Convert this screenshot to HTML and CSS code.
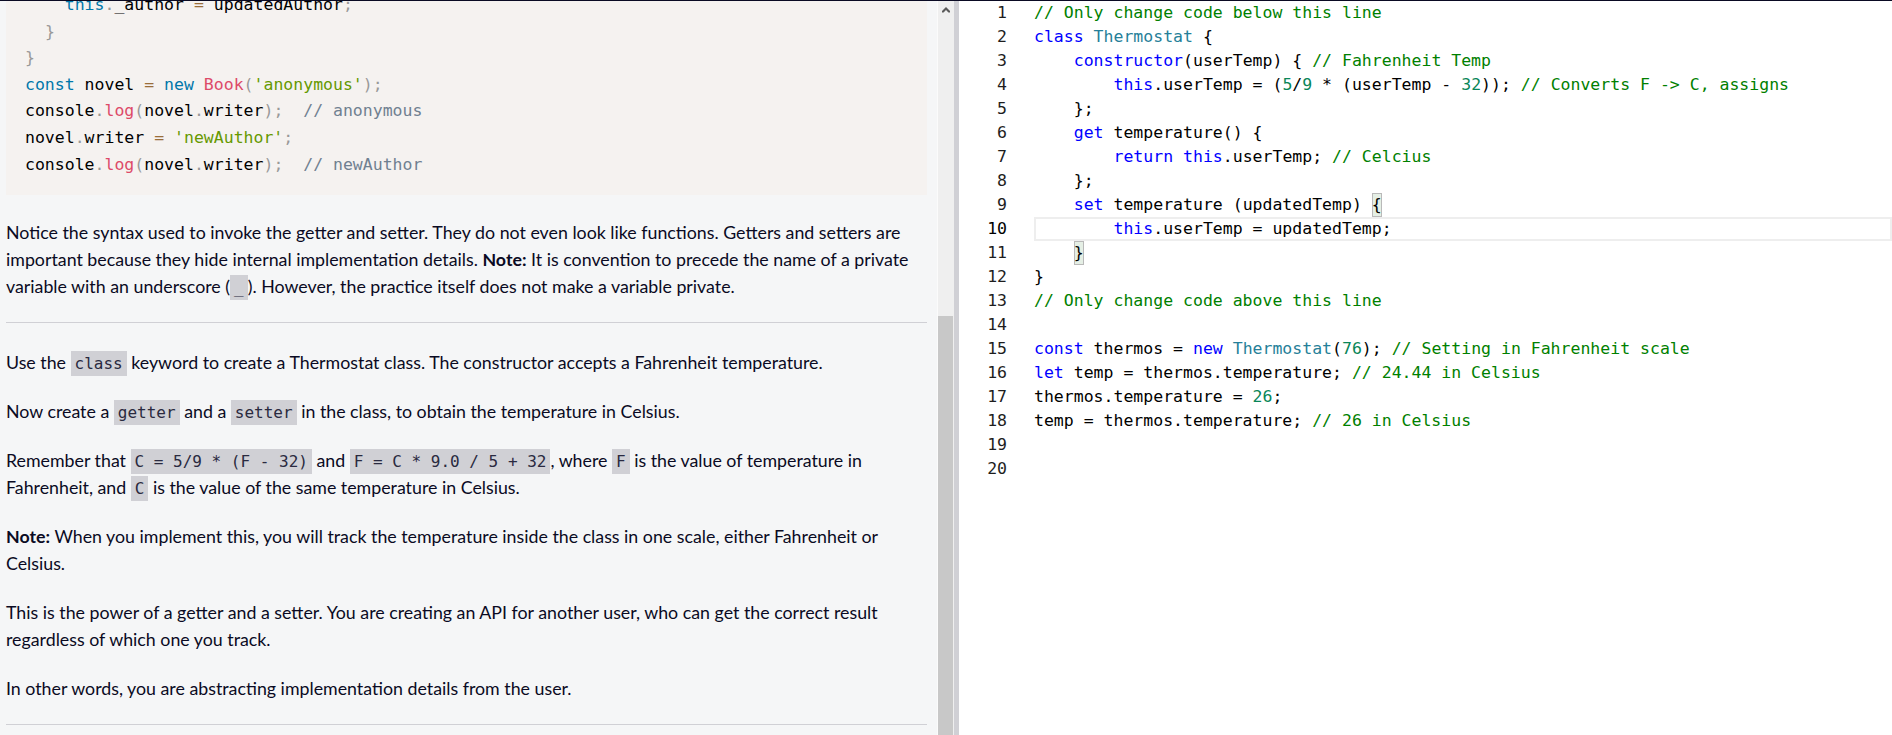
FILE: index.html
```html
<!DOCTYPE html>
<html lang="en">
<head>
<meta charset="utf-8">
<title>Use getters and setters to Control Access to an Object</title>
<link rel="stylesheet" href="styles.css">
</head>
<body>
<div class="topbar"></div>
<div class="main">
  <section class="desc">
<pre class="prism"><code><span class="k">class</span> <span class="cn">Book</span> <span class="p">{</span>
  <span class="k">constructor</span><span class="p">(</span>author<span class="p">)</span> <span class="p">{</span>
    <span class="k">this</span><span class="p">.</span>_author <span class="o">=</span> author<span class="p">;</span>
  <span class="p">}</span>
  <span class="cm">// getter</span>
  <span class="k">get</span> <span class="fn">writer</span><span class="p">(</span><span class="p">)</span> <span class="p">{</span>
    <span class="k">return</span> <span class="k">this</span><span class="p">.</span>_author<span class="p">;</span>
  <span class="p">}</span>
  <span class="cm">// setter</span>
  <span class="k">set</span> <span class="fn">writer</span><span class="p">(</span>updatedAuthor<span class="p">)</span> <span class="p">{</span>
    <span class="k">this</span><span class="p">.</span>_author <span class="o">=</span> updatedAuthor<span class="p">;</span>
  <span class="p">}</span>
<span class="p">}</span>
<span class="k">const</span> novel <span class="o">=</span> <span class="k">new</span> <span class="cn">Book</span><span class="p">(</span><span class="s">'anonymous'</span><span class="p">);</span>
console<span class="p">.</span><span class="fn">log</span><span class="p">(</span>novel<span class="p">.</span>writer<span class="p">);</span>  <span class="cm">// anonymous</span>
novel<span class="p">.</span>writer <span class="o">=</span> <span class="s">'newAuthor'</span><span class="p">;</span>
console<span class="p">.</span><span class="fn">log</span><span class="p">(</span>novel<span class="p">.</span>writer<span class="p">);</span>  <span class="cm">// newAuthor</span></code></pre>
    <p>Notice the syntax used to invoke the getter and setter. They do not even look like functions. Getters and setters are important because they hide internal implementation details. <strong>Note:</strong> It is convention to precede the name of a private variable with an underscore (<code>_</code>). However, the practice itself does not make a variable private.</p>
    <hr>
    <p>Use the <code>class</code> keyword to create a Thermostat class. The constructor accepts a Fahrenheit temperature.</p>
    <p>Now create a <code>getter</code> and a <code>setter</code> in the class, to obtain the temperature in Celsius.</p>
    <p>Remember that <code>C = 5/9 * (F - 32)</code> and <code>F = C * 9.0 / 5 + 32</code>, where <code>F</code> is the value of temperature in Fahrenheit, and <code>C</code> is the value of the same temperature in Celsius.</p>
    <p><strong>Note:</strong> When you implement this, you will track the temperature inside the class in one scale, either Fahrenheit or Celsius.</p>
    <p>This is the power of a getter and a setter. You are creating an API for another user, who can get the correct result regardless of which one you track.</p>
    <p>In other words, you are abstracting implementation details from the user.</p>
    <hr>
  </section>
  <div class="vscroll">
    <div class="vscroll-btn"><svg width="8" height="7" viewBox="0 0 8 7"><path d="M0 5 L4 1 L8 5 L8 6.5 L6.5 6.5 L4 4 L1.5 6.5 L0 6.5 Z" fill="#5a5a5a"/></svg></div>
    <div class="vscroll-thumb"></div>
  </div>
  <div class="divider"></div>
  <section class="editor">
    <div class="gutter">
      <div>1</div><div>2</div><div>3</div><div>4</div><div>5</div><div>6</div><div>7</div><div>8</div><div>9</div><div class="cur-num">10</div><div>11</div><div>12</div><div>13</div><div>14</div><div>15</div><div>16</div><div>17</div><div>18</div><div>19</div><div>20</div>
    </div>
    <div class="lines">
<div class="ln"><span class="c">// Only change code below this line</span></div>
<div class="ln"><span class="k">class</span> <span class="t">Thermostat</span> {</div>
<div class="ln">    <span class="k">constructor</span>(userTemp) { <span class="c">// Fahrenheit Temp</span></div>
<div class="ln">        <span class="k">this</span>.userTemp = (<span class="n">5</span>/<span class="n">9</span> * (userTemp - <span class="n">32</span>)); <span class="c">// Converts F -&gt; C, assigns</span></div>
<div class="ln">    };</div>
<div class="ln">    <span class="k">get</span> temperature() {</div>
<div class="ln">        <span class="k">return</span> <span class="k">this</span>.userTemp; <span class="c">// Celcius</span></div>
<div class="ln">    };</div>
<div class="ln">    <span class="k">set</span> temperature (updatedTemp) <span class="bm">{</span></div>
<div class="ln cur">        <span class="k">this</span>.userTemp = updatedTemp;</div>
<div class="ln">    <span class="bm">}</span></div>
<div class="ln">}</div>
<div class="ln"><span class="c">// Only change code above this line</span></div>
<div class="ln"> </div>
<div class="ln"><span class="k">const</span> thermos = <span class="k">new</span> <span class="t">Thermostat</span>(<span class="n">76</span>); <span class="c">// Setting in Fahrenheit scale</span></div>
<div class="ln"><span class="k">let</span> temp = thermos.temperature; <span class="c">// 24.44 in Celsius</span></div>
<div class="ln">thermos.temperature = <span class="n">26</span>;</div>
<div class="ln">temp = thermos.temperature; <span class="c">// 26 in Celsius</span></div>
<div class="ln"> </div>
<div class="ln"> </div>
    </div>
  </section>
</div>
</body>
</html>
```
FILE: styles.css
```css
html, body {
  margin: 0;
  padding: 0;
}

body {
  background: #ffffff;
  height: 735px;
  overflow: hidden;
}

.topbar {
  height: 1px;
  background: #0a0a23;
}

.main {
  display: flex;
  height: 734px;
}

/* ---------- description panel ---------- */
.desc {
  flex: none;
  width: 937px;
  box-sizing: border-box;
  padding: 0 10px 0 6px;
  background: #f5f6f7;
  overflow: hidden;
  font-family: Lato, "Open Sans", sans-serif;
  font-size: 17.8px;
  line-height: 27px;
  color: #0a0a23;
}

.prism {
  margin: -292px 0 24px;
  padding: 17px 19px;
  background: #f5f2f0;
  font-family: "DejaVu Sans Mono", monospace;
  font-size: 16.5px;
  line-height: 26.6px;
  color: #000000;
  white-space: pre;
  overflow: hidden;
}

.prism code {
  font-family: inherit;
}

.prism .k { color: #0077aa; }
.prism .cn { color: #dd4a68; }
.prism .fn { color: #dd4a68; }
.prism .s { color: #669900; }
.prism .p { color: #999999; }
.prism .o { color: #9a6e3a; }
.prism .cm { color: #708090; }

.desc p {
  margin: 0 0 22px;
}

.desc p code {
  font-family: "DejaVu Sans Mono", monospace;
  font-size: 16px;
  line-height: 1;
  padding: 3px 4px;
  background: #d0d0d5;
  color: #2a2a40;
}

.desc hr {
  border: 0;
  height: 1px;
  background: #d0d0d5;
  margin: 2px 0 26px;
}

/* ---------- scrollbar ---------- */
.vscroll {
  flex: none;
  width: 17px;
  box-sizing: border-box;
  border-left: 1px solid #fbfbfb;
  background: #efefef;
  display: flex;
  flex-direction: column;
}

.vscroll-btn {
  height: 17px;
  display: flex;
  align-items: center;
  justify-content: center;
  padding-right: 1px;
}

.vscroll-thumb {
  flex: 1;
  margin: 298px 1px 0 0;
  background: #c8c8c8;
}

.divider {
  flex: none;
  width: 5px;
  background: #d0d0d5;
}

/* ---------- editor ---------- */
.editor {
  flex: 1;
  display: flex;
  background: #ffffff;
  font-family: "DejaVu Sans Mono", monospace;
  font-size: 16.5px;
  line-height: 24px;
  color: #000000;
}

.gutter {
  flex: none;
  width: 75px;
  box-sizing: border-box;
  padding-right: 27px;
  text-align: right;
  color: #1e1e1e;
}

.gutter div {
  height: 24px;
}

.gutter .cur-num {
  color: #000000;
}

.lines {
  flex: 1;
}

.ln {
  height: 24px;
  white-space: pre;
}

.cur {
  box-shadow: inset 0 0 0 2px #eeeeee;
}

.lines .c { color: #008000; }
.lines .k { color: #0000ff; }
.lines .t { color: #267f99; }
.lines .n { color: #098658; }

.bm {
  display: inline-block;
  height: 24px;
  vertical-align: top;
  background: rgba(0, 100, 0, 0.1);
  box-shadow: inset 0 0 0 1px #b9b9b9;
}
```
